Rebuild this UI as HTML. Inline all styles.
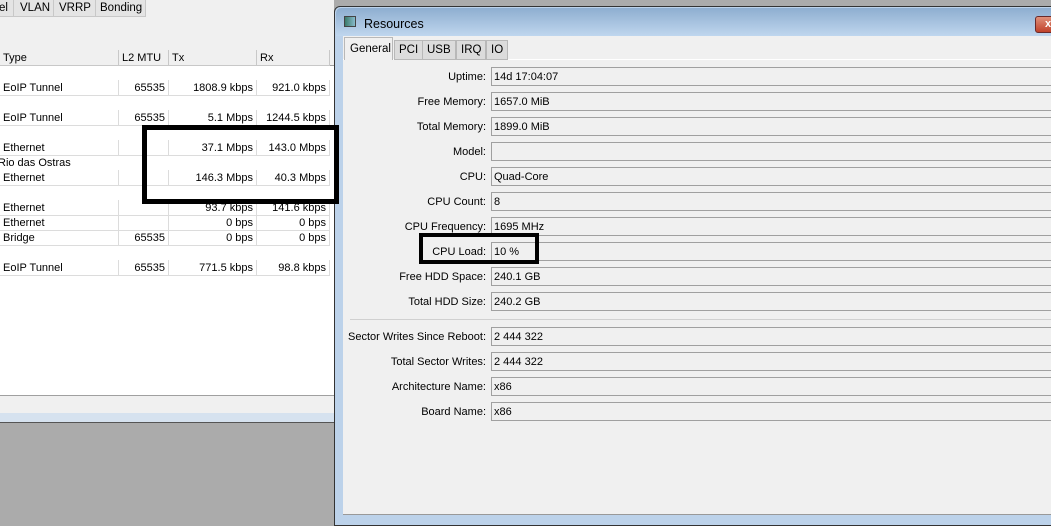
<!DOCTYPE html>
<html><head><style>
*{margin:0;padding:0;box-sizing:border-box}
body{width:1051px;height:521px;overflow:hidden;background:#ababab;font-family:"Liberation Sans",sans-serif;font-size:11px;color:#000;position:relative}
.a{position:absolute}
.tab{position:absolute;top:0;height:17px;background:#e4e4e4;border:1px solid #c8c8c8;border-top:none;padding:1px 4px;line-height:15px;font-size:11.5px}
.cell{position:absolute;height:16px;line-height:15px;padding-top:1px;border-bottom:1px solid #dcdcdc;border-right:1px solid #dcdcdc;white-space:nowrap;overflow:hidden;padding-left:3px;padding-right:3px}
.r{text-align:right}
.lbl{position:absolute;right:565px;width:170px;text-align:right;line-height:20px}
.fld{position:absolute;left:491px;width:570px;height:19px;border:1px solid #a0a0a0;background:#f0f0f0;line-height:18px;padding-left:2px}
.wt{position:absolute;top:40px;height:20px;background:#dcdcdc;border:1px solid #b8b8b8;line-height:18px;padding:0 4px;font-size:11.5px}
</style></head><body>
<div class="a" style="left:0;top:0;width:334px;height:412px;background:#fff"></div>
<div class="a" style="left:0;top:0;width:334px;height:49px;background:#f0f0f0"></div>
<div class="tab" style="left:-6px;width:20px">el</div>
<div class="tab" style="left:13px;width:41px;padding-left:6px">VLAN</div>
<div class="tab" style="left:53px;width:43px;padding-left:5px">VRRP</div>
<div class="tab" style="left:95px;width:51px">Bonding</div>
<div class="a" style="left:0;top:49px;width:334px;height:17px;background:#f0f0f0;border-bottom:1px solid #a0a0a0"></div>
<div class="cell" style="top:50px;left:0;width:119px;border-color:#c8c8c8">Type</div>
<div class="cell" style="top:50px;left:119px;width:50px;border-color:#c8c8c8">L2 MTU</div>
<div class="cell" style="top:50px;left:169px;width:88px;border-color:#c8c8c8">Tx</div>
<div class="cell" style="top:50px;left:257px;width:73px;border-color:#c8c8c8">Rx</div>

<div class="cell" style="top:80px;left:0;width:119px">EoIP Tunnel</div><div class="cell r" style="top:80px;left:119px;width:50px">65535</div><div class="cell r" style="top:80px;left:169px;width:88px">1808.9 kbps</div><div class="cell r" style="top:80px;left:257px;width:73px">921.0 kbps</div>
<div class="cell" style="top:110px;left:0;width:119px">EoIP Tunnel</div><div class="cell r" style="top:110px;left:119px;width:50px">65535</div><div class="cell r" style="top:110px;left:169px;width:88px">5.1 Mbps</div><div class="cell r" style="top:110px;left:257px;width:73px">1244.5 kbps</div>
<div class="cell" style="top:140px;left:0;width:119px">Ethernet</div><div class="cell r" style="top:140px;left:119px;width:50px"></div><div class="cell r" style="top:140px;left:169px;width:88px">37.1 Mbps</div><div class="cell r" style="top:140px;left:257px;width:73px">143.0 Mbps</div>
<div class="a" style="top:156px;left:-2px;line-height:15px">Rio das Ostras</div>
<div class="cell" style="top:170px;left:0;width:119px">Ethernet</div><div class="cell r" style="top:170px;left:119px;width:50px"></div><div class="cell r" style="top:170px;left:169px;width:88px">146.3 Mbps</div><div class="cell r" style="top:170px;left:257px;width:73px">40.3 Mbps</div>
<div class="cell" style="top:200px;left:0;width:119px">Ethernet</div><div class="cell r" style="top:200px;left:119px;width:50px"></div><div class="cell r" style="top:200px;left:169px;width:88px">93.7 kbps</div><div class="cell r" style="top:200px;left:257px;width:73px">141.6 kbps</div>
<div class="cell" style="top:215px;left:0;width:119px">Ethernet</div><div class="cell r" style="top:215px;left:119px;width:50px"></div><div class="cell r" style="top:215px;left:169px;width:88px">0 bps</div><div class="cell r" style="top:215px;left:257px;width:73px">0 bps</div>
<div class="cell" style="top:230px;left:0;width:119px">Bridge</div><div class="cell r" style="top:230px;left:119px;width:50px">65535</div><div class="cell r" style="top:230px;left:169px;width:88px">0 bps</div><div class="cell r" style="top:230px;left:257px;width:73px">0 bps</div>
<div class="cell" style="top:260px;left:0;width:119px">EoIP Tunnel</div><div class="cell r" style="top:260px;left:119px;width:50px">65535</div><div class="cell r" style="top:260px;left:169px;width:88px">771.5 kbps</div><div class="cell r" style="top:260px;left:257px;width:73px">98.8 kbps</div>

<div class="a" style="left:0;top:395px;width:334px;height:18px;background:#f0f0f0;border-top:1px solid #a0a0a0"></div>
<div class="a" style="left:0;top:413px;width:334px;height:10px;background:#d6e2ef;border-bottom:1px solid #555"></div>

<div class="a" style="left:334px;top:6px;width:730px;height:520px;background:#bcd2ea;border:1px solid #333;border-radius:6px 6px 0 0"></div>
<div class="a" style="left:336px;top:8px;width:730px;height:28px;background:linear-gradient(#8eaed0,#bfd6ee);border-radius:5px 5px 0 0"></div>
<div class="a" style="left:344px;top:16px;width:12px;height:11px;border:1px solid #444;background:linear-gradient(90deg,#3a7a6a,#8bc)"></div>
<div class="a" style="left:364px;top:17px;font-size:12.5px">Resources</div>
<div class="a" style="left:1035px;top:16px;width:30px;height:17px;background:linear-gradient(#e0907a,#c0412a);border:1px solid #6a2a2a;border-radius:3px;color:#fff;font-weight:bold;line-height:15px;padding-left:9px">x</div>
<div class="a" style="left:343px;top:36px;width:720px;height:479px;background:#f0f0f0;border-bottom:1px solid #999"></div>
<div class="a" style="left:343px;top:59px;width:720px;height:1px;background:#fff"></div>
<div class="a" style="left:344px;top:37px;width:49px;height:23px;background:#f0f0f0;border:1px solid #b8b8b8;border-bottom:none;padding:5px 0 0 5px;font-size:11.5px">General</div>
<div class="wt" style="left:394px;line-height:19px">PCI</div>
<div class="wt" style="left:422px;line-height:19px">USB</div>
<div class="wt" style="left:456px;line-height:19px">IRQ</div>
<div class="wt" style="left:486px;line-height:19px">IO</div>

<div class="lbl" style="top:67px">Uptime:</div><div class="fld" style="top:67px">14d 17:04:07</div>
<div class="lbl" style="top:92px">Free Memory:</div><div class="fld" style="top:92px">1657.0 MiB</div>
<div class="lbl" style="top:117px">Total Memory:</div><div class="fld" style="top:117px">1899.0 MiB</div>
<div class="lbl" style="top:142px">Model:</div><div class="fld" style="top:142px"></div>
<div class="lbl" style="top:167px">CPU:</div><div class="fld" style="top:167px">Quad-Core</div>
<div class="lbl" style="top:192px">CPU Count:</div><div class="fld" style="top:192px">8</div>
<div class="lbl" style="top:217px">CPU Frequency:</div><div class="fld" style="top:217px">1695 MHz</div>
<div class="lbl" style="top:242px">CPU Load:</div><div class="fld" style="top:242px">10 %</div>
<div class="lbl" style="top:267px">Free HDD Space:</div><div class="fld" style="top:267px">240.1 GB</div>
<div class="lbl" style="top:292px">Total HDD Size:</div><div class="fld" style="top:292px">240.2 GB</div>
<div class="a" style="left:350px;top:319px;width:710px;height:1px;background:#d0d0d0"></div>
<div class="lbl" style="top:327px">Sector Writes Since Reboot:</div><div class="fld" style="top:327px">2 444 322</div>
<div class="lbl" style="top:352px">Total Sector Writes:</div><div class="fld" style="top:352px">2 444 322</div>
<div class="lbl" style="top:377px">Architecture Name:</div><div class="fld" style="top:377px">x86</div>
<div class="lbl" style="top:402px">Board Name:</div><div class="fld" style="top:402px">x86</div>
<div class="a" style="left:419px;top:233px;width:120px;height:31px;border:4px solid #000"></div>
<div class="a" style="left:142px;top:125px;width:197px;height:79px;border:5px solid #000"></div>
</body></html>
